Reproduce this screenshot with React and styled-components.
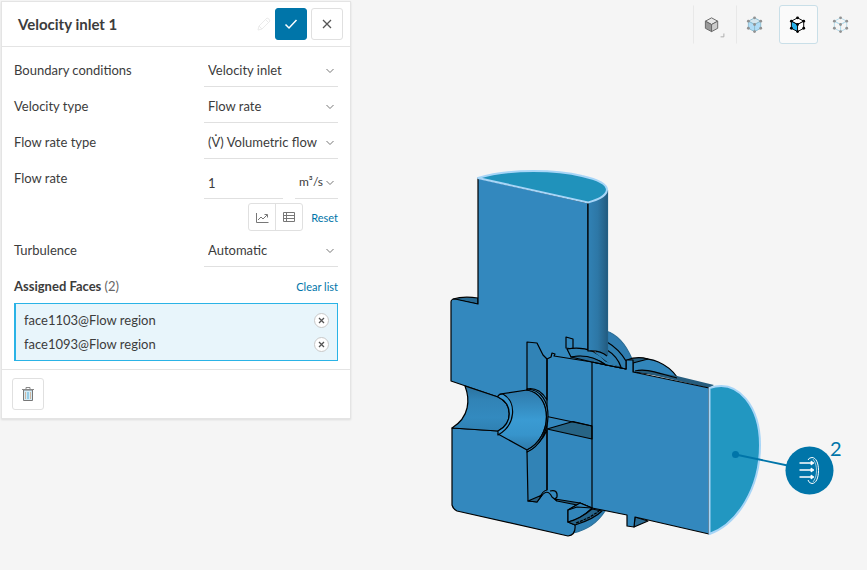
import { useState } from "react";
import styled, { createGlobalStyle } from "styled-components";

const VIEW_MODES = ["shaded", "volumes", "faces", "vertices"];

const App = () => {
  const [faces, setFaces] = useState(["face1103", "face1093"]);
  const [mode, setMode] = useState("faces");

  const removeFace = (face) => setFaces(faces.filter((item) => item !== face));

  return (
    <Page>
      <GlobalStyle />
      <Panel>
        <Header>
          <Title>Velocity inlet 1</Title>
          <HeaderActions>
            <PencilIcon />
            <IconButton $primary aria-label="Apply">
              <svg width="16" height="16" viewBox="0 0 16 16" fill="none">
                <path d="M2.500 8.500 6 12 13.500 4" stroke="#fff" strokeWidth="1.500" />
              </svg>
            </IconButton>
            <IconButton aria-label="Close">
              <svg width="10" height="10" viewBox="0 0 10 10" fill="none">
                <path d="M1 1 9 9M9 1 1 9" stroke="#555" strokeWidth="1.3" />
              </svg>
            </IconButton>
          </HeaderActions>
        </Header>

        <Body>
          <SelectRow id="boundary" label="Boundary conditions" value="Velocity inlet" />
          <SelectRow id="velocity" label="Velocity type" value="Flow rate" />
          <SelectRow id="rateType" label="Flow rate type" value="(V̇) Volumetric flow" />
          <RateRow>
            <Label htmlFor="rate">Flow rate</Label>
            <RateControls>
              <RateFields>
                <RateInput id="rate" defaultValue="1" />
                <Dropdown label="Unit" value="m³/s" $unit />
              </RateFields>
              <RateTools>
                <ButtonGroup>
                  <GroupButton aria-label="Plot">
                    <svg width="13" height="11" viewBox="0 0 13 11" fill="none" stroke="#777">
                      <path d="M.5 1v9.5H12.5M2 8l3-3 2 2 4-4M8.500 2.500H11.500V5.500" />
                    </svg>
                  </GroupButton>
                  <GroupButton aria-label="Table">
                    <svg width="12" height="10" viewBox="0 0 12 10" fill="none" stroke="#777">
                      <path d="M.5.5h11v9H.5zM.5 3.500h11M.5 6.500h11M3.500.5v9" />
                    </svg>
                  </GroupButton>
                </ButtonGroup>
                <TextLink href="#reset">Reset</TextLink>
              </RateTools>
            </RateControls>
          </RateRow>
          <SelectRow id="turbulence" label="Turbulence" value="Automatic" />

          <FacesHeader>
            <FacesTitle>
              Assigned Faces <Count>({faces.length})</Count>
            </FacesTitle>
            <TextLink href="#clear" onClick={() => setFaces([])}>
              Clear list
            </TextLink>
          </FacesHeader>
          <FaceList>
            {faces.map((face) => (
              <FaceItem key={face}>
                {face}@Flow region
                <RemoveButton aria-label={`Remove ${face}`} onClick={() => removeFace(face)}>
                  <svg width="7" height="7" viewBox="0 0 7 7">
                    <path d="M1 1 6 6M6 1 1 6" stroke="#555" strokeWidth="1.3" />
                  </svg>
                </RemoveButton>
              </FaceItem>
            ))}
          </FaceList>
        </Body>

        <Footer>
          <IconButton aria-label="Delete">
            <TrashIcon />
          </IconButton>
        </Footer>
      </Panel>

      <Viewport>
        <Toolbar>
          {VIEW_MODES.map((name) => (
            <ModeButton
              key={name}
              aria-label={name}
              $active={mode === name}
              $divided={name === "shaded" || name === "volumes"}
              onClick={() => setMode(name)}
            >
              <CubeIcon mode={name} />
            </ModeButton>
          ))}
        </Toolbar>
        <Scene>
          <Model />
        </Scene>
      </Viewport>
    </Page>
  );
};

const Dropdown = ({ id, label, value, $unit }) => (
  <SelectWrap $unit={$unit}>
    <Select id={id} aria-label={label} defaultValue={value} $unit={$unit}>
      <option>{value}</option>
    </Select>
    <Chevron width="8" height="6" viewBox="0 0 8 6" fill="none">
      <path d="M.5 1 4 4.500 7.500 1" stroke="#777" />
    </Chevron>
  </SelectWrap>
);

const SelectRow = ({ id, label, value }) => (
  <Row>
    <Label htmlFor={id}>{label}</Label>
    <Dropdown id={id} label={label} value={value} />
  </Row>
);

const PencilIcon = () => (
  <svg width="14" height="14" viewBox="0 0 14 14" fill="none" stroke="#ebebeb">
    <path d="M1 13 2 9 10 1Q12 1 13 4L5 12ZM8.500 2.500 11.500 5.500M2 9 5 12" />
  </svg>
);

const TrashIcon = () => (
  <svg width="12" height="14" viewBox="0 0 12 14" fill="none">
    <path d="M1.500 3h9v10.500h-9z" fill="#d3ebf6" stroke="#777" />
    <path d="M0 2.500h12M4 2V.5h4V2" stroke="#888" />
    <path d="M3.500 5v7M8.500 5v7" stroke="#cfb59f" />
    <path d="M6 5v7" stroke="#5aaed6" />
  </svg>
);

const CUBE_COLORS = {
  shaded: { line: "#666", top: "#e8e8e8", left: "#999", right: "#ccc" },
  volumes: { line: "#8dbdd2", top: "#d5e6ee", left: "#b0dcf6", right: "#b0dcf6", dot: "#929292" },
  faces: { line: "#000", top: "#fff", left: "#26b0e8", right: "#fff", dot: "#000" },
  vertices: { line: "#b5dcec", top: "none", left: "none", right: "none", dot: "#929292" },
};

const CubeIcon = ({ mode }) => {
  const { line, top, left, right, dot } = CUBE_COLORS[mode];
  return (
    <svg width="39" height="39" viewBox="1 0 39 39">
      <g stroke={line} strokeLinejoin="round">
        <path d="M13 16 19.500 12.500 26 16 19.500 19.500Z" fill={top} />
        <path d="M13 16 19.500 19.500V27L13 23.500Z" fill={left} />
        <path d="M26 16 19.500 19.500V27L26 23.500Z" fill={right} />
      </g>
      {dot && (
        <g fill={dot}>
          <circle cx="19.500" cy="12.500" r="1.500" />
          <circle cx="13" cy="16" r="1.500" />
          <circle cx="26" cy="16" r="1.500" />
          <circle cx="19.500" cy="19.500" r="1.500" />
          <circle cx="13" cy="23.500" r="1.500" />
          <circle cx="26" cy="23.500" r="1.500" />
          <circle cx="19.500" cy="27" r="1.500" />
        </g>
      )}
      {mode === "shaded" && <path d="M32.500 29V32.500H29" fill="none" stroke="#aaa" />}
    </svg>
  );
};

const Model = () => (
  <Drawing viewBox="440 160 410 385" role="img" aria-label="Valve flow region">
    <defs>
      <linearGradient id="side">
        <stop offset="0" stopColor="#3182b5" />
        <stop offset=".5" stopColor="#2d77a6" />
        <stop offset="1" stopColor="#235c80" />
      </linearGradient>
      <linearGradient id="bore" x2="0" y2="1">
        <stop offset="0" stopColor="#2b709c" />
        <stop offset=".3" stopColor="#3183b6" />
        <stop offset=".7" stopColor="#338abf" />
        <stop offset="1" stopColor="#2f80b2" />
      </linearGradient>
      <linearGradient id="cone" x2="0" y2="1">
        <stop offset="0" stopColor="#2f7aab" />
        <stop offset=".5" stopColor="#3a9bd3" />
        <stop offset=".75" stopColor="#3794cb" />
        <stop offset="1" stopColor="#2d78a8" />
      </linearGradient>
    </defs>
    <g stroke="#000" strokeWidth="1.2" strokeLinejoin="round">
      {/* rings behind the branches */}
      <path d="M606 331C619 335 627 347 632 359L626 369 592 362Z" fill="#2f7caf" stroke="#2a6c95" />
      <path d="M633 359C651 356 668 364 677 377L633 372Z" fill="#3286bb" />
      <path d="M635 371C646 368 657 373 677 376L714 385 709 388Z" fill="#265d7e" stroke="none" />
      <path d="M635 371C646 368 657 373 677 378" fill="none" />
      <path d="M627 360Q637 356 648 359L633 363Z" fill="#255f81" />
      <path d="M573 533C587 530 598 522 605 511L578 502 567 511V523Z" fill="#2f7fb2" stroke="#2a6f99" />
      <path d="M634 527 648 521 635 517Z" fill="#2a6c94" />
      <path d="M453 299Q463 296 478 298V304Z" fill="#286b94" />

      {/* cut faces */}
      <path
        d="M478 178 588 203V350L592 362 626 369V360L633 360V372L709 388V534L635 517 634 527 627 526V515L592 508 580 503 568 510V522L575 525Q576 535 568 536L457 511Q453 509 452 505V428L498 431V397L451 381V302Q451 299 455 299L478 304Z"
        fill="#3388be"
      />

      {/* inner chamber */}
      <path d="M527 390V342L537 343 543 355 547 359V400C543 393 536 387 527 389Z" fill="#3183b6" />
      <path d="M547 430V490Q542 491 540 498L537 502 528 501 527 452Q541 444 547 430Z" fill="#3183b6" />
      <path d="M528 501 537 502 542 495Z" fill="#275f82" />
      <path d="M547 429 573 421.500 592 426V439Z" fill="#276485" />
      <path
        d="M547 359V490M592 362V508M547 416.500 592 426M547 359 551 357 552 353 555 354 554 356 592 362"
        fill="none"
      />
      <path d="M555 499 580 503 592 508 557 501Z" fill="#255f81" />
      <path d="M540 498Q547 487 552 497L557 501M550 491Q558 489 557 497L555 499" fill="none" />

      {/* inlet bore and conical seat */}
      <path
        d="M465 386C470 399 470 417 452 428L498 431C513 423 513 404 498 397Z"
        fill="url(#bore)"
      />
      <path d="M500 394 527 390C553 394 553 437 527 450L498 434C514 424 514 402 500 394Z" fill="url(#cone)" />
      <path d="M498 396Q499 394 503 394C517 402 516 425 498 435V431C513 423 513 404 498 397Z" fill="#3996cf" />
      <path d="M527 389C556 390 554 440 527 452V450C553 437 553 394 527 390Z" fill="#3a94ca" />

      {/* thread seat under the vertical branch */}
      <path d="M566 337 573 339V349L566 348Z" fill="#3388be" />
      <path d="M567 349Q591 345 606 361L626 369 606 365Q590 354 571 357Z" fill="#3082b4" />
      <path d="M571 357Q590 353 606 365L592 362Z" fill="#296d98" />
      <path d="M606 342V354L594 352 610 364 621 367 626 369V360Q620 350 606 342Z" fill="#2f7fb1" stroke="none" />
      <path d="M607 342Q619 349 626 361M607 350Q617 356 621 367M626 360V369L592 362" fill="none" />
      <path d="M588 203 607.500 190V356Q599 350 588 351Z" fill="url(#side)" stroke="none" />
      <path d="M588 203V351Q600 350 607 356" fill="none" />
      <path d="M607.500 190V356" stroke="#235f83" />

      {/* thread under the horizontal branch */}
      <path d="M568 510 580 503 592 508Q580 520 568 522Z" fill="#3286bb" />
      <path d="M568 510 577 507 592 508" fill="none" />
      <path d="M575 525Q594 519 602 511L592 509Q580 519 568 522Z" fill="#26658b" />
      <path d="M576 523Q590 518 599 511" fill="none" strokeDasharray="3 1" />
    </g>

    {/* selected faces */}
    <g stroke="#a7d5f7" strokeWidth="2" strokeLinejoin="round">
      <path d="M478 178C511 168 558 170 582 176 600 180 607 185 607 190 606 197 596 200 588 202.500Z" fill="#2092bb" />
      <path d="M709.500 388C739 378 760 408 760 445 760 489 737 524 709.500 534Z" fill="#2297c1" />
    </g>
    <path d="M735.500 454.500 790 466" stroke="#0075a9" strokeWidth="1.800" />
    <circle cx="735.500" cy="454.500" r="3.500" fill="#0075a9" />
    <circle cx="809.500" cy="470.500" r="24" fill="#0075a9" />
    <g fill="none" stroke="#fff">
      <path d="M808 460Q809 457.500 812 457.500C816 457.500 818.500 463 818.500 470.500 818.500 478 816 483.500 812 483.500Q809 483.500 808 480" />
      <path d="M813 459C816 463 816.500 467 816.500 470.500 816.500 474 816 478 813 482" strokeWidth=".6" />
      <path d="M799.500 463H812M799.500 470H812M799.500 477H812" strokeWidth="1.300" />
      <path
        d="M811 461 814 463 811 465ZM811 468 814 470 811 472ZM811 475 814 477 811 479Z"
        fill="#fff"
        strokeWidth=".8"
      />
    </g>
    <text x="830" y="456" fill="#0075a9" fontSize="20">
      2
    </text>
  </Drawing>
);

const GlobalStyle = createGlobalStyle`
  * {
    box-sizing: border-box;
  }
  body {
    margin: 0;
    background: #f5f5f5;
    color: #3c3c3c;
    font-family: Lato, sans-serif;
    font-size: 13px;
  }
  button, input, select {
    color: inherit;
    font: inherit;
  }
  svg {
    display: block;
  }
`;

const Page = styled.div`
  display: flex;
  align-items: flex-start;
  min-height: 100vh;
  padding: 1px 0 0 1px;
`;

const Panel = styled.section`
  flex: 0 0 350px;
  border: 1px solid #e4e4e4;
  background: #fff;
  box-shadow: 0 1px 2px rgba(0, 0, 0, 0.1);
`;

const Header = styled.header`
  display: flex;
  align-items: center;
  justify-content: space-between;
  height: 45px;
  padding: 0 7px 0 16px;
  border-bottom: 1px solid #e4e4e4;
`;

const Title = styled.h1`
  margin: 0;
  font-size: 15px;
  font-weight: 700;
`;

const HeaderActions = styled.div`
  display: flex;
  align-items: center;
  gap: 4px;
`;

const IconButton = styled.button`
  display: flex;
  align-items: center;
  justify-content: center;
  width: 32px;
  height: 32px;
  padding: 0;
  border: 1px solid ${({ $primary }) => ($primary ? "#0075a9" : "#e0e0e0")};
  border-radius: 3px;
  background: ${({ $primary }) => ($primary ? "#0075a9" : "#fff")};
  cursor: pointer;
`;

const Body = styled.div`
  padding: 4px 12px 8px;
`;

const Row = styled.div`
  display: flex;
  justify-content: space-between;
  align-items: flex-start;
  height: 36px;
`;

const RateRow = styled(Row)`
  height: 72px;
`;

const Label = styled.label`
  line-height: 38px;
`;

const SelectWrap = styled.div`
  position: relative;
  width: ${({ $unit }) => ($unit ? "43px" : "134px")};
  margin-top: ${({ $unit }) => ($unit ? "0" : "4px")};
`;

const Select = styled.select`
  display: block;
  width: 100%;
  height: 32px;
  padding: 0 0 2px 4px;
  border: none;
  border-bottom: 1px solid #e0e0e0;
  border-radius: 0;
  background: none;
  font-size: ${({ $unit }) => ($unit ? "12px" : "13px")};
  appearance: none;
`;

const Chevron = styled.svg`
  position: absolute;
  top: 13px;
  right: 4px;
  pointer-events: none;
`;

const RateControls = styled.div`
  width: 134px;
  padding-top: 8px;
`;

const RateFields = styled.div`
  display: flex;
  justify-content: space-between;
`;

const RateInput = styled.input`
  width: 79px;
  height: 32px;
  padding: 0 4px;
  border: none;
  border-bottom: 1px solid #e0e0e0;
`;

const RateTools = styled.div`
  display: flex;
  align-items: center;
  justify-content: flex-end;
  gap: 8px;
  padding-top: 4px;
`;

const ButtonGroup = styled.div`
  display: flex;
  border: 1px solid #e0e0e0;
  border-radius: 3px;
`;

const GroupButton = styled.button`
  display: flex;
  align-items: center;
  justify-content: center;
  width: 26px;
  height: 26px;
  padding: 0;
  border: none;
  background: none;
  cursor: pointer;

  & + & {
    width: 27px;
    border-left: 1px solid #e0e0e0;
  }
`;

const TextLink = styled.a`
  color: #0075a9;
  font-size: 11px;
  text-decoration: none;
`;

const FacesHeader = styled(Row)`
  align-items: center;
  padding-top: 2px;
`;

const FacesTitle = styled.h2`
  margin: 0;
  font-size: 13px;
  font-weight: 700;
`;

const Count = styled.span`
  color: #666;
  font-weight: 400;
`;

const FaceList = styled.ul`
  margin: 0;
  padding: 4px 8px;
  border: 1px solid #2ab3e6;
  border-left-width: 2px;
  background: #e8f5fb;
  list-style: none;
`;

const FaceItem = styled.li`
  display: flex;
  align-items: center;
  justify-content: space-between;
  height: 24px;
`;

const RemoveButton = styled.button`
  display: flex;
  align-items: center;
  justify-content: center;
  width: 15px;
  height: 15px;
  padding: 0;
  border: 1px solid #c8c8c8;
  border-radius: 50%;
  background: #fff;
  cursor: pointer;
`;

const Footer = styled.footer`
  padding: 8px 10px;
  border-top: 1px solid #e4e4e4;
`;

const Viewport = styled.main`
  flex: 1;
  min-width: 0;
`;

const Toolbar = styled.nav`
  display: flex;
  justify-content: flex-end;
  gap: 4px;
  padding: 4px 6px 0 0;
`;

const ModeButton = styled.button`
  display: flex;
  align-items: center;
  justify-content: center;
  width: 39px;
  height: 39px;
  padding: 0;
  border: 1px solid ${({ $active }) => ($active ? "#c9dfe8" : "transparent")};
  border-left-color: ${({ $divided, $active }) => ($active ? "#c9dfe8" : $divided ? "#e8e8e8" : "transparent")};
  border-radius: ${({ $divided }) => ($divided ? "0" : "3px")};
  background: ${({ $active }) => ($active ? "#fafafa" : "none")};
  cursor: pointer;
`;

const Scene = styled.div`
  display: flex;
  justify-content: flex-end;
  padding: 116px 17px 0 0;
`;

const Drawing = styled.svg`
  width: 410px;
  max-width: 100%;
`;

export default App;
